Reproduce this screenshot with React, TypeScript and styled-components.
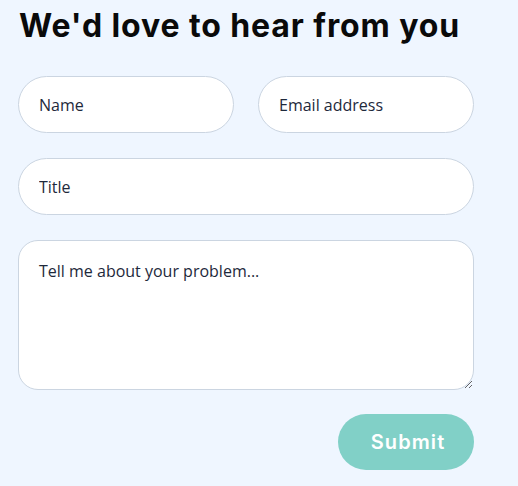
import React from "react";
import styled, { createGlobalStyle } from "styled-components";

const Global = createGlobalStyle`
  html, body { margin: 0; padding: 0; background: #eff6ff; }
  body { font-family: "Open Sans", sans-serif; }
  * { box-sizing: border-box; }
`;

const Page = styled.div`
  min-height: 486px;
  background: #eff6ff;
  padding: 6px 0 0 18px;
`;

const Form = styled.form`
  width: 456px;
  display: flex;
  flex-direction: column;
`;

const Heading = styled.h1`
  margin: 0 0 0 1px;
  font-family: "Inter", sans-serif;
  font-weight: 700;
  font-size: 32px;
  line-height: 40px;
  color: #0a0a0a;
  letter-spacing: 0.9px;
`;

const Row = styled.div`
  display: grid;
  grid-template-columns: 1fr 1fr;
  gap: 24px;
  margin-top: 30px;
`;

const Field = styled.input`
  height: 57px;
  width: 100%;
  border: 1px solid #cbd5e1;
  border-radius: 999px;
  background: #fff;
  padding: 0 20px;
  font-family: "Open Sans", sans-serif;
  font-size: 16px;
  color: #1e293b;
  outline: none;
  &::placeholder { color: #1e293b; opacity: 1; }
`;

const Wide = styled(Field)`
  margin-top: 25px;
`;

const Area = styled.textarea`
  margin-top: 25px;
  height: 150px;
  width: 100%;
  border: 1px solid #cbd5e1;
  border-radius: 20px;
  background: #fff;
  padding: 18px 20px;
  font-family: "Open Sans", sans-serif;
  font-size: 16px;
  line-height: 24px;
  color: #1e293b;
  outline: none;
  display: block;
  &::placeholder { color: #1e293b; opacity: 1; }
`;

const Actions = styled.div`
  display: flex;
  justify-content: flex-end;
  margin-top: 24px;
`;

const Submit = styled.button`
  width: 136px;
  height: 56px;
  border: none;
  border-radius: 999px;
  background: #81d0c7;
  color: #fff;
  font-family: "Inter", sans-serif;
  font-weight: 600;
  font-size: 20px;
  letter-spacing: 1.1px;
  padding: 0 0 0 4px;
  cursor: pointer;
`;

export default function App() {
  return (
    <>
      <Global />
      <Page>
        <Form onSubmit={(e) => e.preventDefault()}>
          <Heading>We'd love to hear from you</Heading>
          <Row>
            <Field placeholder="Name" />
            <Field placeholder="Email address" />
          </Row>
          <Wide placeholder="Title" />
          <Area placeholder="Tell me about your problem..." />
          <Actions>
            <Submit type="submit">Submit</Submit>
          </Actions>
        </Form>
      </Page>
    </>
  );
}
